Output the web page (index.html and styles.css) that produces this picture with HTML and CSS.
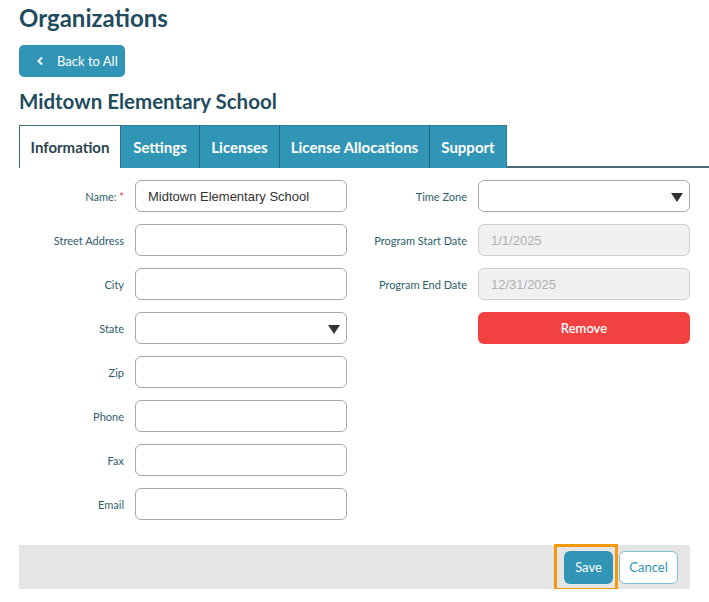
FILE: index.html
```html
<!DOCTYPE html>
<html>
<head>
<meta charset="utf-8">
<link rel="stylesheet" href="styles.css">
</head>
<body>
<div class="page">
  <h1 class="title">Organizations</h1>
  <button class="back-btn"><svg class="chev" width="8" height="10" viewBox="0 0 8 10"><path d="M6 1.5 L2.5 5 L6 8.5" fill="none" stroke="#fff" stroke-width="2"/></svg><span>Back to All</span></button>
  <h2 class="org-name">Midtown Elementary School</h2>
  <div class="tabs">
    <div class="tab active">Information</div>
    <div class="tab t-settings">Settings</div>
    <div class="tab t-licenses">Licenses</div>
    <div class="tab t-alloc">License Allocations</div>
    <div class="tab t-support last">Support</div>
    <div class="tab-fill"></div>
  </div>
  <div class="form">
    <div class="col col-left">
      <div class="row"><label>Name: <span class="req">*</span></label><div class="input">Midtown Elementary School</div></div>
      <div class="row"><label>Street Address</label><div class="input"></div></div>
      <div class="row"><label>City</label><div class="input"></div></div>
      <div class="row"><label>State</label><div class="input select"><span class="caret"></span></div></div>
      <div class="row"><label>Zip</label><div class="input"></div></div>
      <div class="row"><label>Phone</label><div class="input"></div></div>
      <div class="row"><label>Fax</label><div class="input"></div></div>
      <div class="row"><label>Email</label><div class="input"></div></div>
    </div>
    <div class="col col-right">
      <div class="row"><label>Time Zone</label><div class="input select"><span class="caret"></span></div></div>
      <div class="row"><label>Program Start Date</label><div class="input disabled">1/1/2025</div></div>
      <div class="row"><label>Program End Date</label><div class="input disabled">12/31/2025</div></div>
      <div class="row"><span></span><button class="remove-btn">Remove</button></div>
    </div>
  </div>
  <div class="footer">
    <div class="highlight"><button class="save-btn">Save</button></div>
    <button class="cancel-btn">Cancel</button>
  </div>
</div>
</body>
</html>
```

FILE: styles.css
```css
* { box-sizing: border-box; }
html, body { margin: 0; padding: 0; background: #fff; }
body { font-family: "Lato", "Open Sans", sans-serif; width: 709px; overflow: hidden; }
.page { padding: 3px 0 0 19px; }
.title {
  margin: 0;
  font-size: 24px;
  line-height: 30px;
  font-weight: 700;
  color: #1f4d5e;
}
.back-btn {
  margin-top: 12px;
  display: flex;
  align-items: center;
  height: 32px;
  width: 106px;
  padding: 0 0 0 17px;
  border: none;
  border-radius: 5px;
  background: #3195b5;
  color: #fff;
  font-family: inherit;
  font-size: 13px;
}
.back-btn .chev { margin-right: 13px; }
.org-name {
  margin: 12px 0 0;
  font-size: 20.5px;
  line-height: 24px;
  font-weight: 700;
  color: #1f4d5e;
}
.tabs {
  margin-top: 12px;
  display: flex;
  height: 43px;
}
.tab {
  background: #3195b5;
  color: #fff;
  font-weight: 700;
  font-size: 15px;
  display: flex;
  align-items: center;
  justify-content: center;
  border-right: 1px solid #1f6580;
  border-top: 1px solid #2c7e99;
}
.tab.active {
  background: #fff;
  color: #2b4550;
  border: 1px solid #3d6d7a;
  border-bottom: none;
  width: 102px;
}
.t-settings { width: 79px; }
.t-licenses { width: 80px; }
.t-alloc { width: 150px; }
.t-support { width: 77px; }
.tab.last { border-right: 1px solid #2c7e99; }
.tab-fill { flex: 1; border-bottom: 2px solid #4b6872; }
.form {
  display: grid;
  grid-template-columns: 328px 343px;
  margin-top: 12px;
}
.col { display: flex; flex-direction: column; gap: 12px; }
.row {
  display: grid;
  grid-template-columns: 1fr 212px;
  column-gap: 11px;
  align-items: center;
  height: 32px;
}
label {
  text-align: right;
  font-size: 11px;
  color: #2e5d6c;
}
.req { color: #e03a3a; }
.input {
  height: 32px;
  border: 1px solid #a9a9a9;
  border-radius: 6px;
  background: #fff;
  font-family: "Liberation Sans", Arial, sans-serif;
  font-size: 13px;
  color: #333;
  padding: 0 12px;
  display: flex;
  align-items: center;
  position: relative;
}
.input.disabled { background: #f0f0f0; border-color: #cfcfcf; color: #b0b0b0; }
.caret {
  position: absolute;
  right: 6px;
  top: 12px;
  width: 0; height: 0;
  border-left: 6px solid transparent;
  border-right: 6px solid transparent;
  border-top: 9px solid #333;
}
.remove-btn {
  height: 32px;
  border: none;
  border-radius: 6px;
  background: #f24141;
  color: #fff;
  font-family: inherit;
  font-size: 13px;
  font-weight: 600;
}
.footer {
  margin-top: 25px;
  width: 671px;
  height: 44px;
  background: #e5e5e5;
  display: flex;
  align-items: center;
  justify-content: flex-end;
  padding-right: 12px;
}
.highlight {
  border: 3px solid #f59a0f;
  padding: 4px 2px 4px 7px;
  margin-right: 1px;
}
.save-btn {
  display: block;
  width: 49px;
  height: 33px;
  border: none;
  border-radius: 6px;
  background: #3195b5;
  color: #fff;
  font-family: inherit;
  font-size: 13px;
}
.cancel-btn {
  width: 59px;
  height: 33px;
  border: 1px solid #7fc0d4;
  border-radius: 6px;
  background: #fff;
  color: #3195b5;
  font-family: inherit;
  font-size: 13px;
}
```
